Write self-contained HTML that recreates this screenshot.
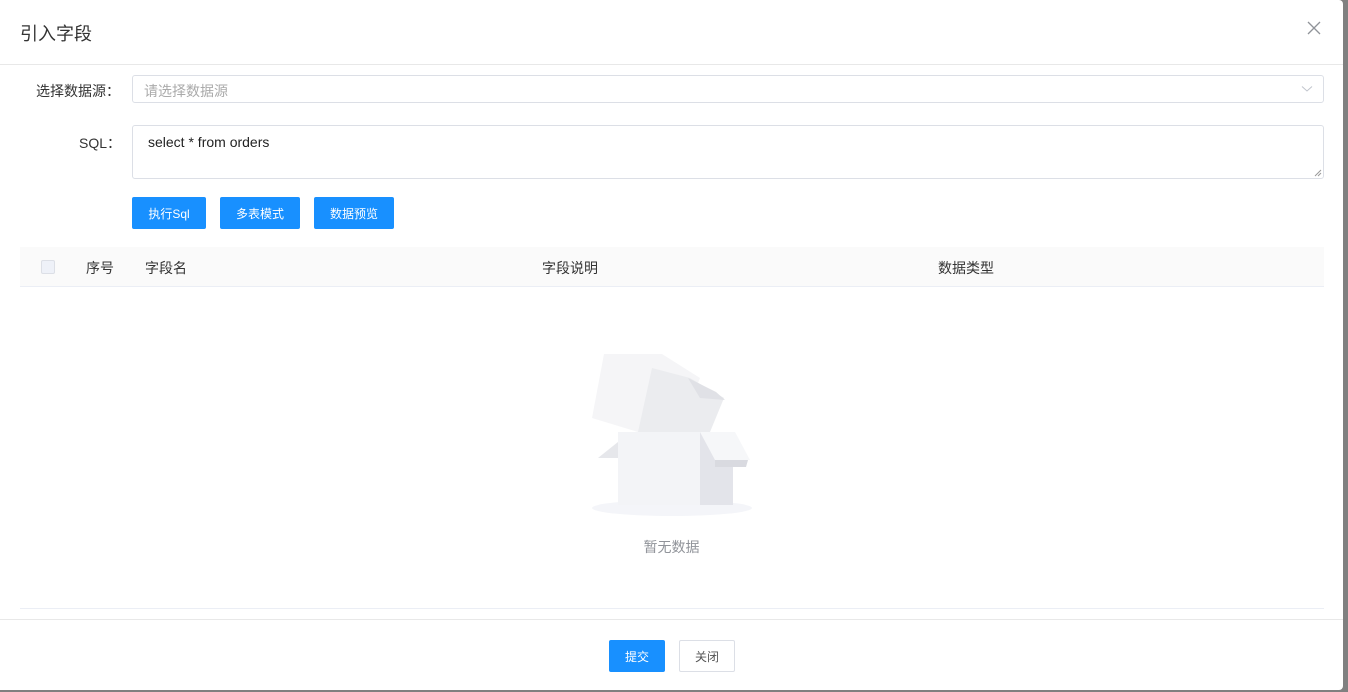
<!DOCTYPE html>
<html><head><meta charset="utf-8"><style>
*{box-sizing:border-box;margin:0;padding:0}
body{width:1348px;height:692px;background:#808080;font-family:"Liberation Sans","Noto Sans CJK SC",sans-serif;overflow:hidden;position:relative}
.m{position:absolute;left:0;top:0;width:1343px;height:690px;background:#fff;border-radius:0 4px 4px 0}
.hd{height:65px;border-bottom:1px solid #e8e8e8;position:relative}
.hd .t{position:absolute;left:20px;top:20px;font-size:18px;color:#333}
.x{position:absolute;left:1306px;top:20px;width:16px;height:16px}
.lbl{position:absolute;font-size:14px;color:#333;text-align:right}
.inp{position:absolute;border:1px solid #dcdfe6;border-radius:3px;background:#fff}
.btn{position:absolute;top:197px;height:32px;background:#1890ff;color:#fff;font-size:12px;border-radius:2px;display:flex;align-items:center;justify-content:center}
.th{position:absolute;left:20px;top:247px;width:1304px;height:40px;background:#fafafa;border-bottom:1px solid #ebeef5;font-size:14px;color:#333}
.th span{position:absolute;top:11px}
.ft{position:absolute;left:0;top:619px;width:1343px;border-top:1px solid #e8e8e8}
</style></head><body>
<div class="m">
<div class="hd"><div class="t">引入字段</div>
<svg class="x" viewBox="0 0 16 16"><path d="M2 2L14 14M14 2L2 14" stroke="#909399" stroke-width="1.3"/></svg></div>
<div class="lbl" style="left:20px;top:81px;width:104px;text-align:left;padding-left:16px">选择数据源：</div>
<div class="inp" style="left:132px;top:75px;width:1192px;height:28px"><span style="position:absolute;left:11px;top:5px;font-size:14px;color:#aaa">请选择数据源</span>
<svg style="position:absolute;right:10px;top:9px" width="12" height="8" viewBox="0 0 12 8"><path d="M1 1.5L6 6L11 1.5" stroke="#c0c4cc" fill="none"/></svg></div>
<div class="lbl" style="left:79px;top:133px;width:60px;text-align:left">SQL：</div>
<div class="inp" style="left:132px;top:125px;width:1192px;height:54px"><span style="position:absolute;left:15px;top:8px;font-size:14px;color:#222">select * from orders</span>
<svg style="position:absolute;right:1px;bottom:1px" width="8" height="8" viewBox="0 0 8 8"><path d="M1 7L7 1M4 7L7 4" stroke="#999"/></svg></div>
<div class="btn" style="left:132px;width:74px">执行Sql</div>
<div class="btn" style="left:220px;width:80px">多表模式</div>
<div class="btn" style="left:314px;width:80px">数据预览</div>
<div class="th"><div style="position:absolute;left:21px;top:13px;width:14px;height:14px;border:1px solid #dcdfe6;border-radius:2px;background:#eef1f8"></div>
<span style="left:66px">序号</span><span style="left:125px">字段名</span><span style="left:522px">字段说明</span><span style="left:918px">数据类型</span></div>
<svg style="position:absolute;left:590px;top:350px" width="165" height="168" viewBox="0 0 165 168">
<ellipse cx="82" cy="158" rx="80" ry="8" fill="#f4f5f9"/>
<polygon points="28,82 110,82 110,155 28,155" fill="#f3f4f7"/>
<polygon points="110,82 143,82 143,155 110,155" fill="#e3e4ea"/>
<polygon points="28,92 8,108 28,108" fill="#e6e7eb"/>
<polygon points="110,82 145,82 160,110 125,110" fill="#f6f7f9"/>
<polygon points="125,110 158,110 156,117 125,117" fill="#d9dae0"/>
<polygon points="14,4 72,4 110,28 88,82 48,82 2,68" fill="#f5f5f7"/>
<polygon points="62,18 100,28 134,48 120,82 48,82" fill="#ebecef"/>
<polygon points="98,28 126,42 135,50 110,48" fill="#e0e1e6"/>
</svg>
<div style="position:absolute;left:0;width:1343px;top:537px;text-align:center;font-size:14px;color:#909399">暂无数据</div>
<div style="position:absolute;left:20px;top:608px;width:1304px;border-top:1px solid #ebeef5"></div>
<div class="ft"></div>
<div style="position:absolute;left:609px;top:640px;width:56px;height:32px;background:#1890ff;color:#fff;font-size:12px;border-radius:2px;display:flex;align-items:center;justify-content:center">提交</div>
<div style="position:absolute;left:679px;top:640px;width:56px;height:32px;border:1px solid #dcdfe6;color:#555;font-size:12px;border-radius:2px;display:flex;align-items:center;justify-content:center">关闭</div>
</div>
</body></html>
